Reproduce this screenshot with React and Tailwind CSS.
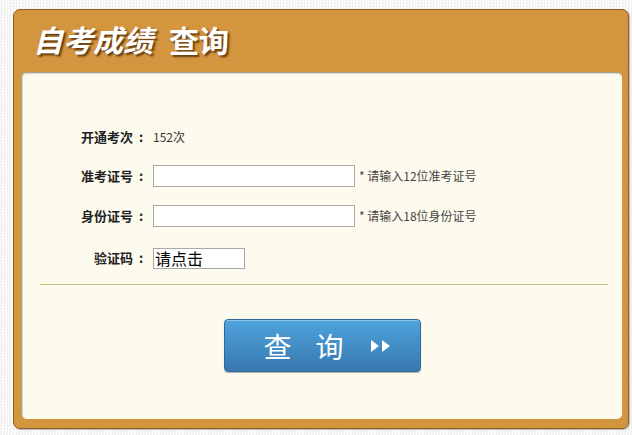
export default function App() {
  const font = { fontFamily: '"Noto Sans CJK SC", "Noto Sans", sans-serif' };

  // label with a centred full-width colon
  const Label = ({ children }) => (
    <span className="w-[70px] flex justify-end text-[13px] font-bold">
      {children}
      <span className="w-[16px] text-center">:</span>
    </span>
  );

  return (
    <div
      className="w-[632px] h-[435px] pt-[9px] pl-[13px] bg-white bg-[conic-gradient(#efefef_25%,#ffffff_0_50%,#efefef_0_75%,#ffffff_0)] bg-[length:3px_3px]"
      style={font}
    >
      <div className="w-[616px] h-[420px] flex flex-col bg-[#d4953f] border border-[#8f5e22] rounded-[7px] shadow-[1px_1px_1px_rgba(0,0,0,0.25)]">
        {/* header */}
        <div className="h-[62px] pl-[19px] pt-[10px] flex items-start">
          <h1 className="text-[30px] leading-[38px] font-bold text-white [text-shadow:2px_2px_2px_rgba(60,30,0,0.75)]">
            <span className="italic">自考成绩</span>
            <span className="ml-[16px]">查询</span>
          </h1>
        </div>

        {/* inner panel */}
        <div className="ml-[7px] mr-[6px] mb-[9px] flex-1 bg-[#fdfaee] rounded-[5px] border-t border-l border-[#a7a08c] shadow-[inset_1px_1px_1px_rgba(0,0,0,0.15)] flex flex-col">
          <div className="pt-[53px] pl-[57px] flex flex-col text-[#222]">
            <div className="h-[22px] flex items-center">
              <Label>开通考次</Label>
              <span className="ml-[4px] text-[12px] text-[#333]">152次</span>
            </div>

            <div className="h-[22px] mt-[17px] flex items-center">
              <Label>准考证号</Label>
              <input
                type="text"
                className="ml-[4px] w-[202px] h-[22px] bg-white border border-[#a9a9a9] outline-none"
              />
              <span className="ml-[4px] text-[12px] text-[#444]">* 请输入12位准考证号</span>
            </div>

            <div className="h-[22px] mt-[18px] flex items-center">
              <Label>身份证号</Label>
              <input
                type="text"
                className="ml-[4px] w-[202px] h-[22px] bg-white border border-[#a9a9a9] outline-none"
              />
              <span className="ml-[4px] text-[12px] text-[#444]">* 请输入18位身份证号</span>
            </div>

            <div className="h-[22px] mt-[20px] flex items-center">
              <Label>验证码</Label>
              <div className="ml-[4px] w-[92px] h-[21px] bg-white border border-[#a9a9a9] pl-[1px] text-[16px] leading-[19px] text-black">
                请点击
              </div>
            </div>
          </div>

          {/* divider */}
          <div className="mt-[15px] ml-[18px] mr-[14px] h-px bg-[#cfc281]"></div>

          {/* submit */}
          <div className="mt-[34px] flex justify-center">
            <button className="w-[197px] h-[53px] rounded-[4px] border border-[#2f6899] bg-gradient-to-b from-[#4fa3dc] to-[#3878b0] shadow-[inset_0_1px_0_rgba(255,255,255,0.35),0_1px_1px_rgba(0,0,0,0.3)] flex items-center justify-center text-white">
              <span className="text-[28px] leading-none ml-[10px]">查</span>
              <span className="text-[28px] leading-none ml-[24px]">询</span>
              <svg width="20" height="12" viewBox="0 0 20 12" className="ml-[27px]">
                <path d="M0 0 L8 6 L0 12 Z M11 0 L19 6 L11 12 Z" fill="#ffffff" />
              </svg>
            </button>
          </div>
        </div>
      </div>
    </div>
  );
}
